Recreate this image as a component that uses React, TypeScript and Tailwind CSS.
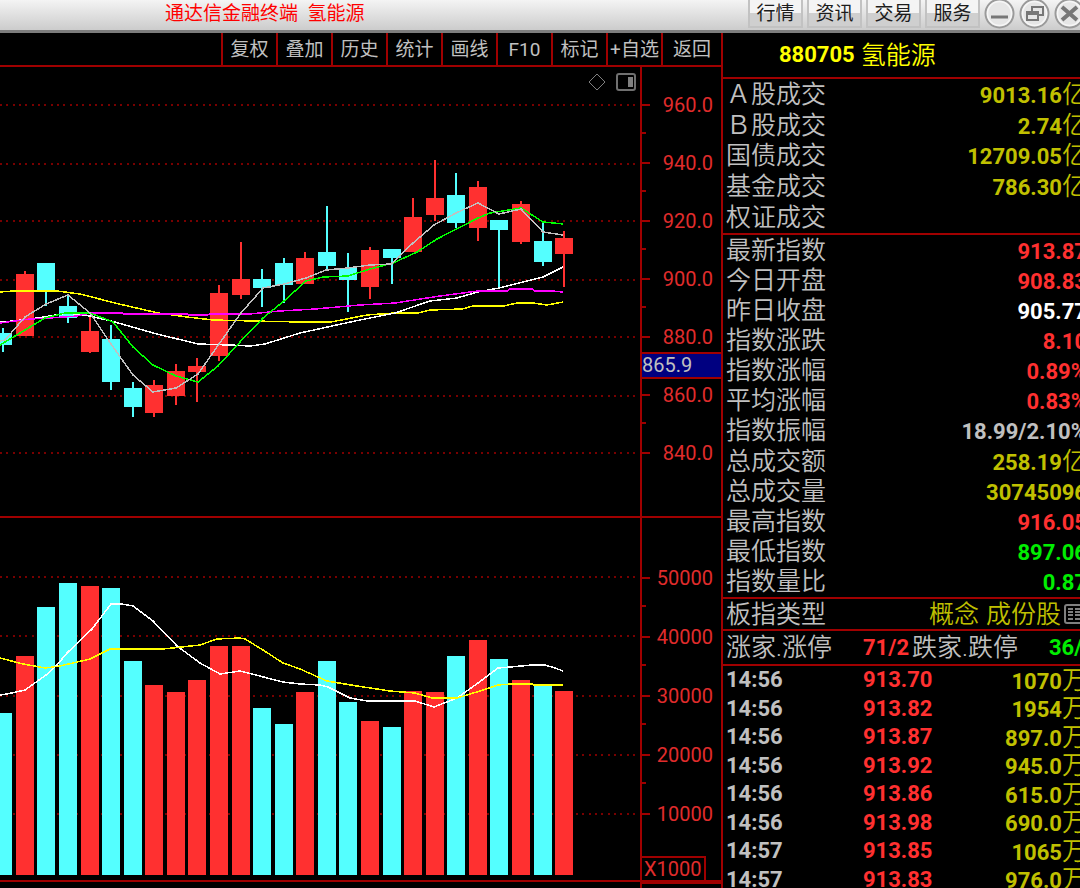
import type { ReactNode } from 'react'

const RED = '#ff3030'
const CYAN = '#54ffff'

// top / bottom of the wick, top / bottom of the body
const candles = [
  { up: false, wick: [328, 352], body: [333, 345], vol: 713 },
  { up: true, wick: [271, 336], body: [274, 336], vol: 656 },
  { up: false, wick: [263, 306], body: [263, 290], vol: 607 },
  { up: false, wick: [296, 323], body: [306, 318], vol: 583 },
  { up: true, wick: [315, 353], body: [331, 352], vol: 586 },
  { up: false, wick: [325, 390], body: [339, 382], vol: 588 },
  { up: false, wick: [382, 417], body: [388, 407], vol: 661 },
  { up: true, wick: [380, 417], body: [385, 413], vol: 685 },
  { up: true, wick: [364, 405], body: [371, 396], vol: 692 },
  { up: true, wick: [358, 402], body: [366, 372], vol: 680 },
  { up: true, wick: [285, 361], body: [293, 356], vol: 646 },
  { up: true, wick: [242, 299], body: [279, 295], vol: 646 },
  { up: false, wick: [269, 307], body: [279, 288], vol: 708 },
  { up: false, wick: [258, 303], body: [263, 285], vol: 724 },
  { up: true, wick: [252, 284], body: [258, 284], vol: 692 },
  { up: false, wick: [206, 270], body: [252, 266], vol: 661 },
  { up: false, wick: [253, 312], body: [268, 280], vol: 702 },
  { up: true, wick: [247, 299], body: [250, 287], vol: 721 },
  { up: false, wick: [249, 284], body: [249, 258], vol: 727 },
  { up: true, wick: [198, 252], body: [217, 252], vol: 691 },
  { up: true, wick: [160, 221], body: [198, 215], vol: 692 },
  { up: false, wick: [173, 228], body: [195, 223], vol: 656 },
  { up: true, wick: [181, 241], body: [187, 228], vol: 640 },
  { up: false, wick: [220, 287], body: [220, 230], vol: 659 },
  { up: true, wick: [201, 244], body: [204, 242], vol: 680 },
  { up: false, wick: [223, 266], body: [241, 262], vol: 685 },
  { up: true, wick: [231, 287], body: [238, 254], vol: 691 },
]

const centerOf = (i: number) => Math.round(3.3 + i * 21.57)

const priceLines = [
  { color: '#ffff00', points: '0,292 13,291 57,291 80,294 115,303 158,313 187,317 213,320 253,321 300,322 331,322 367,315 395,313 418,313 430,310 462,309 473,306 504,306 517,303 533,303 547,305 563,302' },
  { color: '#ffffff', points: '0,322 13,321 30,319 50,316 67,313 90,316 115,322 153,333 198,344 230,345 250,346 265,344 300,333 323,328 355,321 395,313 430,301 457,298 478,292 499,288 543,277 563,267' },
  { color: '#ff00ff', points: '0,323 30,319 50,318 77,316 90,313 122,313 124,314 187,314 189,315 207,315 210,314 250,314 280,311 315,309 360,305 395,303 440,296 478,291 507,291 510,289 532,289 535,291 552,291 563,292' },
  { color: '#00ff00', points: '0,345 25,330 45,318 65,313 90,313 113,322 133,347 153,365 176,376 198,382 218,366 240,342 263,318 284,301 306,281 323,277 348,276 370,269 393,263 417,252 437,239 478,218 490,213 521,208 532,215 543,222 563,224' },
  { color: '#c0c0c0', points: '0,341 5,340 25,317 46,304 68,295 90,313 111,344 133,375 153,392 176,388 198,374 219,344 241,313 263,288 284,284 306,278 326,270 348,268 370,265 391,264 413,243 434,225 456,213 478,203 499,214 521,209 543,232 563,235' },
]

const volumeLines = [
  { color: '#ffffff', points: '0,695 7,694 25,690 46,675 57,665 67,653 92,629 111,604 122,604 133,606 153,621 177,646 200,663 220,674 240,671 283,682 300,684 320,685 328,687 350,698 367,701 415,701 434,707 457,698 478,683 498,668 510,667 532,665 545,665 555,668 563,671' },
  { color: '#ffff00', points: '0,658 23,664 45,668 60,666 90,659 110,649 163,649 200,645 217,639 240,638 245,639 263,650 283,663 300,669 327,681 357,686 390,691 415,693 432,698 457,698 480,691 498,685 512,684 532,684 534,685 563,685' },
]

const toolbar = ['复权', '叠加', '历史', '统计', '画线', 'F10', '标记', '+自选', '返回']

const turnover = [
  ['Ａ股成交', '9013.16', '亿'],
  ['Ｂ股成交', '2.74', '亿'],
  ['国债成交', '12709.05', '亿'],
  ['基金成交', '786.30', '亿'],
  ['权证成交', '', ''],
]

const red = 'text-[#ff3030]'
const green = 'text-[#00ee00]'
const gray = 'text-[#c0c0c0]'
const gold = 'text-[#c0c000]'

const quotes = [
  ['最新指数', '913.87', red],
  ['今日开盘', '908.83', red],
  ['昨日收盘', '905.77', 'text-white'],
  ['指数涨跌', '8.10', red],
  ['指数涨幅', '0.89%', red],
  ['平均涨幅', '0.83%', red],
  ['指数振幅', '18.99/2.10%', gray],
  ['总成交额', '258.19', gold, '亿'],
  ['总成交量', '30745096', gold],
  ['最高指数', '916.05', red],
  ['最低指数', '897.06', green],
  ['指数量比', '0.87', green],
]

const ticks = [
  ['14:56', '913.70', '1070'],
  ['14:56', '913.82', '1954'],
  ['14:56', '913.87', '897.0'],
  ['14:56', '913.92', '945.0'],
  ['14:56', '913.86', '615.0'],
  ['14:56', '913.98', '690.0'],
  ['14:57', '913.85', '1065'],
  ['14:57', '913.83', '976.0'],
]

const RoundButton = ({ label, children }: { label: string; children: ReactNode }) => (
  <button aria-label={label} className="h-[31px] w-[31px] shrink-0">
    <svg viewBox="0 0 31 31" className="h-full w-full" fill="none">
      <circle cx="15.5" cy="15.5" r="14" fill="#e6e6e6" stroke="#9a9a9a" strokeWidth="2" />
      <circle cx="15.5" cy="15.5" r="12" stroke="#f6f6f6" strokeWidth="1.5" />
      {children}
    </svg>
  </button>
)

function Header() {
  return (
    <header className="flex h-[33px] shrink-0 items-start justify-between overflow-hidden border-b-3 border-[#7d7d7d] bg-linear-to-b from-[#f4f4f4] to-[#cccccc]">
      <h1 className="pl-[165px] text-[19px] leading-[27px] text-[#ff0000]">通达信金融终端&nbsp; 氢能源</h1>
      <div className="-mr-[5px] flex shrink-0 items-start gap-1">
        {['行情', '资讯', '交易', '服务'].map((label) => (
          <button
            key={label}
            className="h-7 w-[55px] border-2 border-t-0 border-[#c2c2c2] bg-linear-to-b from-[#f4f4f4] from-50% to-[#cfcfcf] to-50% text-[19px] leading-7 text-[#1c1c1c]"
          >
            {label}
          </button>
        ))}
        <div className="-mt-[2px] flex gap-1">
          <RoundButton label="最小化">
            <path d="M7 19h17" stroke="#777777" strokeWidth="3" />
          </RoundButton>
          <RoundButton label="还原">
            <path d="M13 14V9h11v8h-5M8 14h11v8H8zM8 16h11" stroke="#777777" strokeWidth="2" />
          </RoundButton>
          <RoundButton label="关闭">
            <path d="M8 9l15 13M23 9L8 22" stroke="#777777" strokeWidth="4" />
          </RoundButton>
        </div>
      </div>
    </header>
  )
}

function Toolbar() {
  return (
    <nav className="flex h-[34px] shrink-0 justify-end border-b-2 border-[#a00000]">
      {toolbar.map((label) => (
        <button
          key={label}
          className="w-[55px] border-l-2 border-[#a00000] pt-px text-[19px] leading-8 whitespace-nowrap text-[#c0c0c0] last:w-[60px]"
        >
          {label}
        </button>
      ))}
    </nav>
  )
}

const Grid = ({ rows }: { rows: number[] }) => (
  <g stroke="#780000" strokeWidth="2" strokeDasharray="2 4.33">
    {rows.map((y) => (
      <path key={y} d={`M0 ${y}H635`} />
    ))}
  </g>
)

const Lines = ({ lines }: { lines: { color: string; points: string }[] }) => (
  <g fill="none" strokeWidth="1.5">
    {lines.map((line) => (
      <polyline key={line.color} points={line.points} stroke={line.color} />
    ))}
  </g>
)

// Tick marks on the left, one label per row; half ticks fall between rows
function Axis({ labels, row }: { labels: string[]; row: string }) {
  return (
    <ul>
      {labels.map((label, i) => (
        <li key={label} className={`${row} relative flex items-center justify-between pr-2`}>
          <span className="h-[2px] w-2 bg-[#a00000]" />
          <span className="text-xl leading-none text-[#e02c2c]">{label}</span>
          {i < labels.length - 1 && <span className="absolute bottom-0 left-0 h-[2px] w-1 bg-[#a00000]" />}
        </li>
      ))}
    </ul>
  )
}

function PricePane() {
  return (
    <section className="flex h-[451px] shrink-0 border-b-2 border-[#a00000]">
      <div className="relative min-w-0 flex-1">
        <svg
          viewBox="0 67 640 449"
          preserveAspectRatio="none"
          shapeRendering="crispEdges"
          className="h-full w-full"
          role="img"
          aria-label="K线图"
        >
          <Grid rows={[105, 164, 221, 280, 337, 396, 453]} />
          {candles.map(({ up, wick, body }, i) => (
            <g key={i} fill={up ? RED : CYAN}>
              <rect x={centerOf(i) - 1} y={wick[0]} width="2" height={wick[1] - wick[0]} />
              <rect x={centerOf(i) - 9} y={body[0]} width="18" height={body[1] - body[0]} />
            </g>
          ))}
          <Lines lines={priceLines} />
        </svg>
        <div className="absolute top-[5px] right-1 flex gap-[9px]">
          <button aria-label="标记点">
            <svg width="20" height="20" viewBox="0 0 20 20" fill="none" stroke="#808080">
              <path d="M10 2l8 8-8 8-8-8z" />
            </svg>
          </button>
          <button aria-label="侧栏">
            <svg width="20" height="20" viewBox="0 0 20 20" fill="none">
              <rect x="1" y="2" width="18" height="16" rx="2" stroke="#707070" strokeWidth="2" />
              <rect x="12" y="5" width="5" height="10" fill="#808080" />
            </svg>
          </button>
        </div>
      </div>
      <div className="relative w-[81px] shrink-0 border-l-2 border-[#a00000] pt-[9px]">
        <Axis labels={['960.0', '940.0', '920.0', '900.0', '880.0', '860.0', '840.0']} row="h-[58px]" />
        <div className="absolute inset-x-0 top-[285px] h-[27px] border-y-2 border-[#a00000] bg-[#000080] text-xl leading-[22px] text-[#c0c0c0]">
          865.9
        </div>
      </div>
    </section>
  )
}

function VolumePane() {
  return (
    <section className="flex h-[364px] shrink-0 border-b-2 border-[#a00000]">
      <div className="min-w-0 flex-1">
        <svg
          viewBox="0 518 640 362"
          preserveAspectRatio="none"
          shapeRendering="crispEdges"
          className="h-full w-full"
          role="img"
          aria-label="成交量"
        >
          <Grid rows={[577, 636, 696, 755, 814]} />
          {candles.map(({ up, vol }, i) => (
            <rect key={i} x={centerOf(i) - 9} y={vol} width="18" height={875 - vol} fill={up ? RED : CYAN} />
          ))}
          <Lines lines={volumeLines} />
        </svg>
      </div>
      <div className="flex w-[81px] shrink-0 flex-col justify-between border-l-2 border-[#a00000] pt-[30px]">
        <Axis labels={['50000', '40000', '30000', '20000', '10000']} row="h-[59px]" />
        <div className="h-6 w-16 border-t-2 border-r-2 border-[#a00000] pl-[2px] text-xl leading-[22px] text-[#e02c2c]">X1000</div>
      </div>
    </section>
  )
}

function QuotePanel() {
  return (
    <aside className="w-[359px] shrink-0 overflow-hidden border-l-2 border-[#a00000] text-[25px] leading-none font-[350] text-[#c0c0c0]">
      <div className="-mr-[7px]">
        <h2 className="flex h-[46px] items-center gap-[6px] border-b-2 border-[#a00000] pl-14 text-[#ffff00]">
          <span className="text-[22px] font-bold">880705</span>
          <span>氢能源</span>
        </h2>
        <table className="h-[156px] w-full border-b-2 border-[#a00000]">
          <tbody>
            {turnover.map(([label, value, unit]) => (
              <tr key={label}>
                <th className="pl-[3px] text-left font-[350]">{label}</th>
                <td className="text-right text-[#c0c000]">
                  <span className="text-[22px] font-bold">{value}</span>
                  <span>{unit}</span>
                </td>
              </tr>
            ))}
          </tbody>
        </table>
        <table className="h-[364px] w-full border-b-2 border-[#a00000]">
          <tbody>
            {quotes.map(([label, value, color, unit]) => (
              <tr key={label}>
                <th className="pl-[3px] text-left font-[350]">{label}</th>
                <td className={`text-right ${color}`}>
                  <span className="text-[22px] font-bold">{value}</span>
                  <span>{unit}</span>
                </td>
              </tr>
            ))}
          </tbody>
        </table>
        <div className="flex h-8 items-center justify-between border-b-2 border-[#a00000] pr-[3px] pl-[3px]">
          <span>板指类型</span>
          <span className="flex items-center gap-[3px] text-[#c0c000]">
            <a href="#concept">概念</a>
            <a href="#members" className="pl-1">成份股</a>
            <svg width="20" height="20" viewBox="0 0 20 20" fill="none" stroke="#808080">
              <rect x="1" y="1" width="18" height="18" rx="2" strokeWidth="2" />
              <path d="M4 5h5M4 8h5M4 11h5M4 15h5M11 5h5M11 8h5M11 11h5M11 15h5" strokeWidth="2" />
            </svg>
          </span>
        </div>
        <div className="flex h-[35px] items-center border-b-2 border-[#a00000] pl-[3px] whitespace-nowrap">
          <span className="w-[137px] shrink-0">涨家.涨停</span>
          <span className="w-[49px] shrink-0 text-[22px] font-bold text-[#ff3030]">71/2</span>
          <span className="w-[137px] shrink-0">跌家.跌停</span>
          <span className="text-[22px] font-bold text-[#00ee00]">36/1</span>
        </div>
        <table className="h-[228px] w-full text-[22px] font-bold">
          <tbody>
            {ticks.map(([time, price, amount], i) => (
              <tr key={i}>
                <td className="w-[140px] pl-[3px]">{time}</td>
                <td className="text-[#ff3030]">{price}</td>
                <td className="text-right text-[#c0c000]">
                  {amount}
                  <span className="text-[25px] font-[350]">万</span>
                </td>
              </tr>
            ))}
          </tbody>
        </table>
      </div>
    </aside>
  )
}

export default function App() {
  return (
    <div className="flex h-screen flex-col overflow-hidden bg-black font-['Roboto','Noto_Sans_CJK_SC',sans-serif]">
      <Header />
      <div className="flex min-h-0 flex-1">
        <main className="flex min-w-0 flex-1 flex-col">
          <Toolbar />
          <PricePane />
          <VolumePane />
          <div className="flex flex-1 justify-end">
            <div className="w-[81px] border-t-2 border-l-2 border-[#a00000]" />
          </div>
        </main>
        <QuotePanel />
      </div>
    </div>
  )
}
